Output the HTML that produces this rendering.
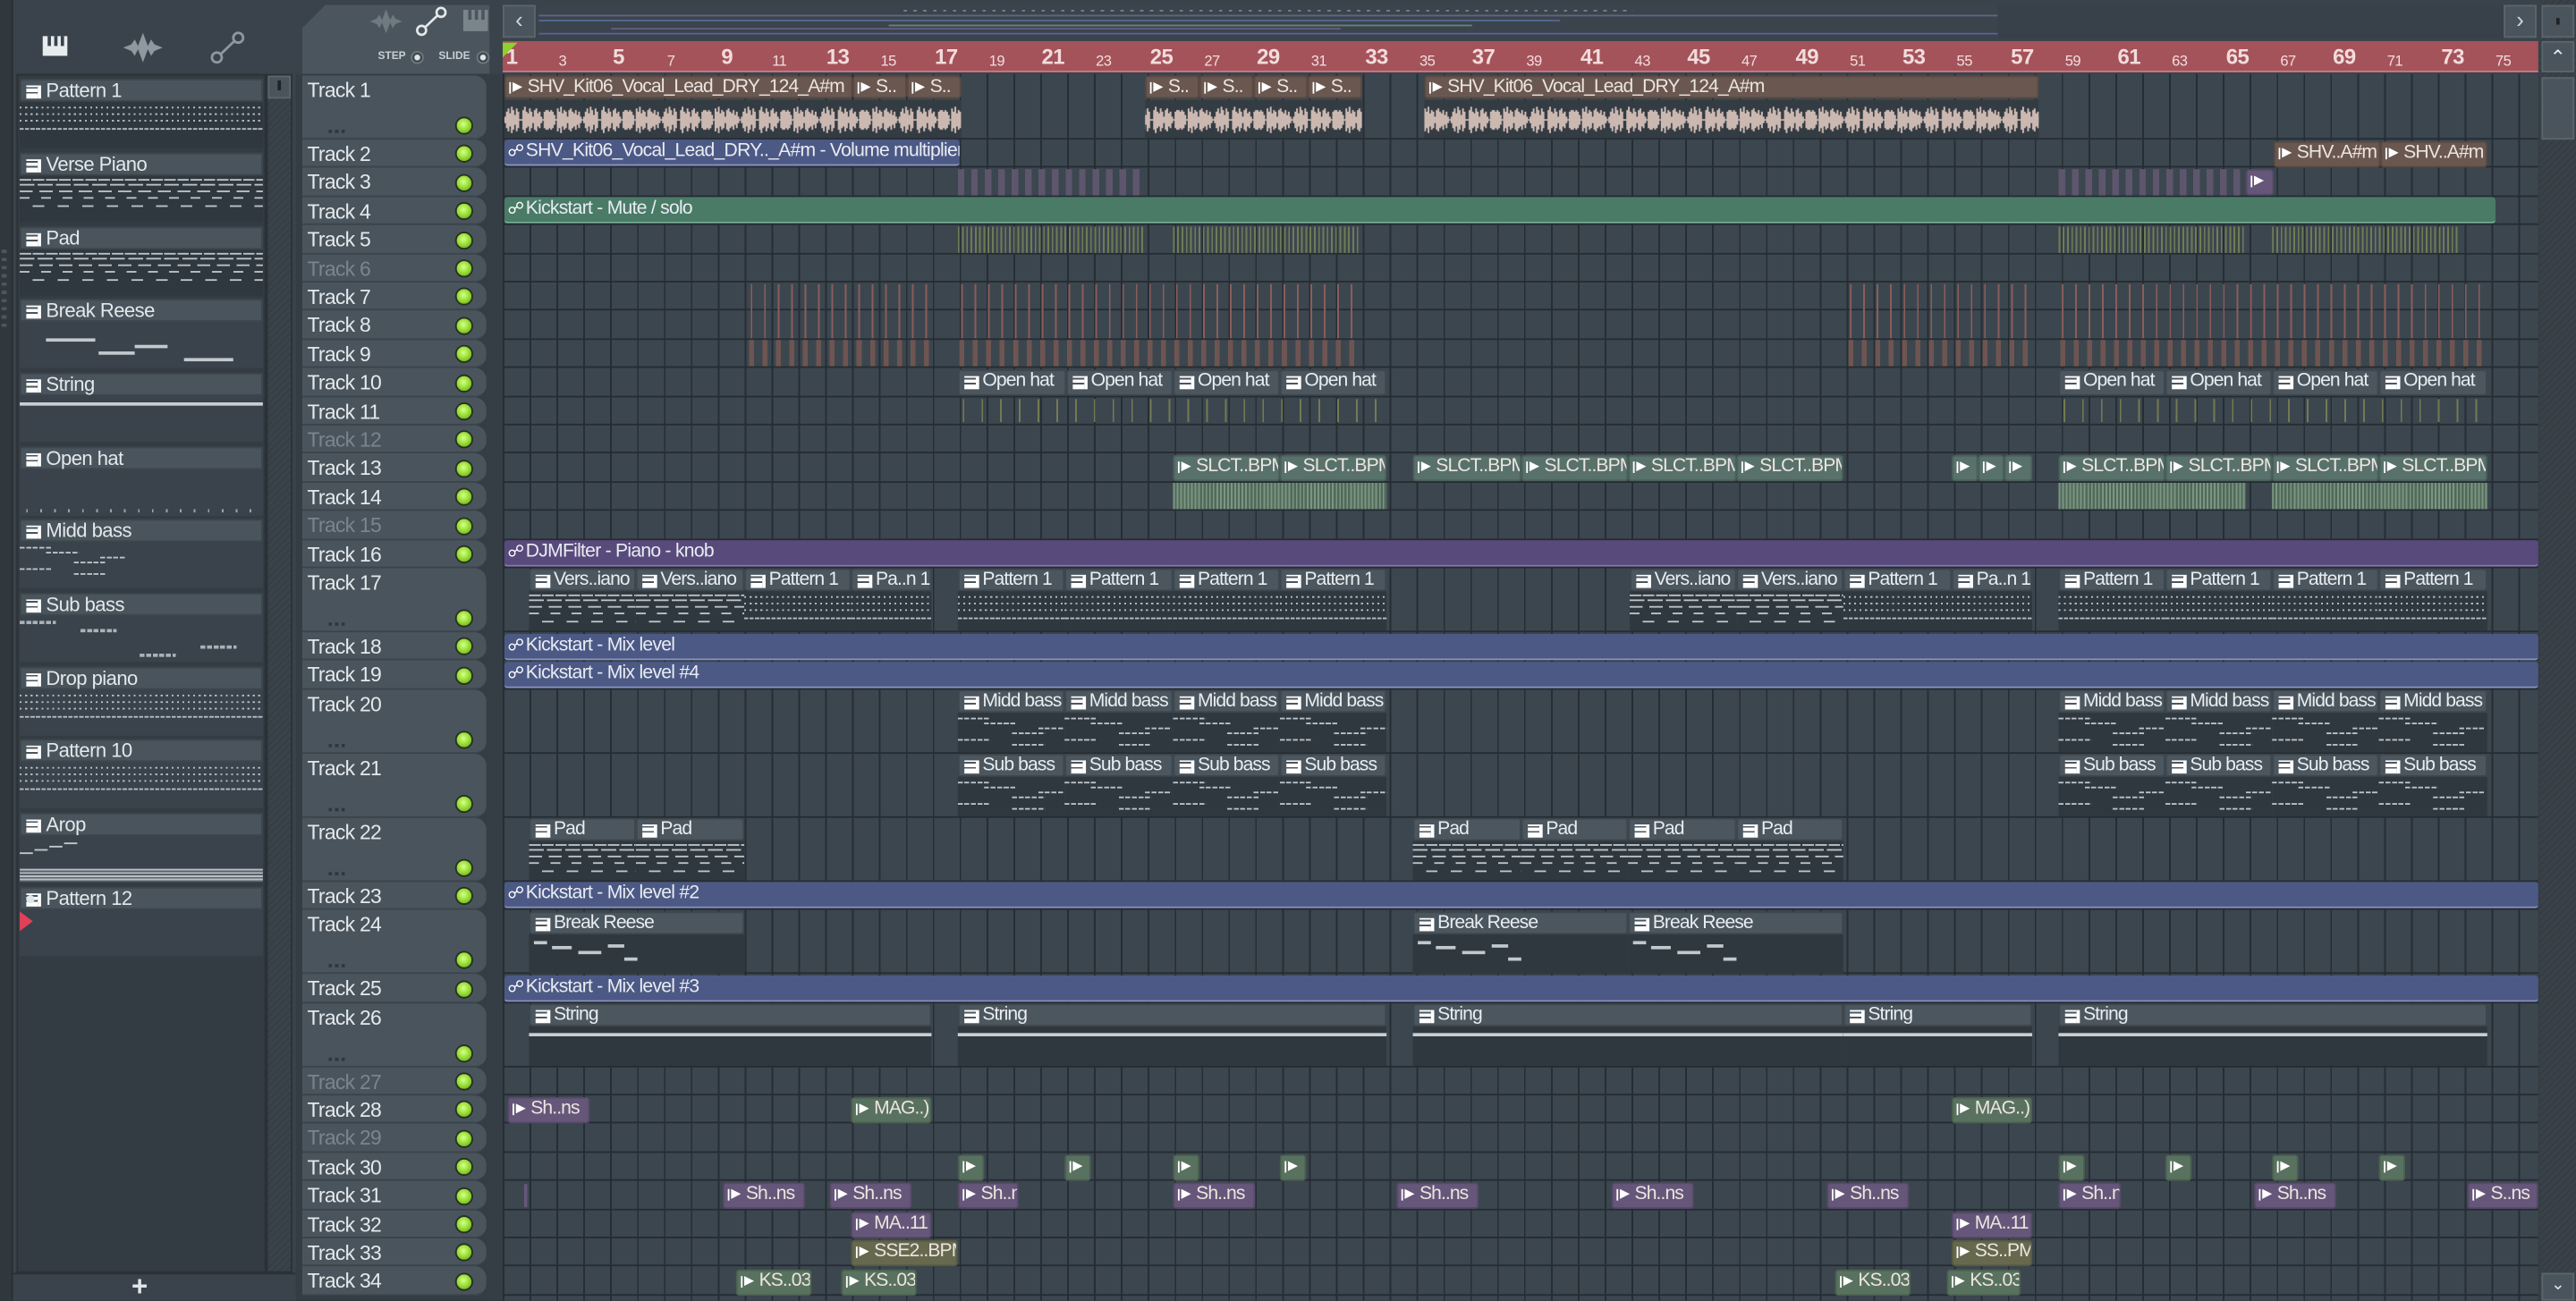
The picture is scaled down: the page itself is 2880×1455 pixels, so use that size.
<!DOCTYPE html>
<html><head><meta charset="utf-8">
<style>
*{box-sizing:border-box}
body{margin:0;width:2880px;height:1454px;overflow:hidden;background:#2f363c;font-family:"Liberation Sans Narrow","Liberation Sans",sans-serif}
.W{position:absolute;left:0;top:0;width:1568px;height:792px;transform:scale(1.836735);transform-origin:0 0;background:#353d44;overflow:hidden}
.a{position:absolute}
.lp{position:absolute;left:8px;top:0;width:172px;height:792px;background:#3a434b}
.list{position:absolute;left:10px;top:45px;width:152px;height:730px;background:#343c43;border:1px solid #2a3137}
.sb{position:absolute;left:162px;top:45px;width:16px;height:730px;background:repeating-linear-gradient(135deg,#363e45 0 1px,#3b434a 1px 3px);border:1px solid #2a3137}
.pi{position:absolute;left:12px;width:148px;height:14px;background:#4a545c;border:1px solid #3d464d;color:#e3e8eb;font-size:12px;line-height:13px;padding-left:15px;white-space:nowrap;letter-spacing:-0.3px}
.pi::before,.p::before{content:"";position:absolute;left:3px;top:3px;width:7px;height:8px;background:linear-gradient(#fff 0 1px,#4a545c 1px 2px,#fff 2px 4px,#4a545c 4px 5px,#fff 5px 8px);border-right:2px solid #fff}
.pv{position:absolute;left:12px;width:148px;height:28px;background:#3a434b}
.h{position:absolute;left:184px;width:112px;background:#4a545c;border-radius:0 7px 7px 0;border-bottom:1px solid #3c444b;color:#e4e9ec;font-size:12.5px;line-height:15px;padding-left:3px;padding-top:2px;white-space:nowrap;letter-spacing:-0.4px}
.h.d{color:#7b858c}
.h i{position:absolute;right:8px;bottom:2px;width:11px;height:11px;border-radius:50%;background:radial-gradient(circle at 45% 40%,#d8ff8a 0,#9be03a 45%,#5a9a16 100%);border:1px solid #27311f}
.h b{position:absolute;left:16px;bottom:3px;width:12px;height:2px;background:repeating-linear-gradient(90deg,#2f373d 0 2px,transparent 2px 4px)}
.gc{position:absolute;left:296px;top:45px;width:10px;height:747px;background:#353e45}
.grid{position:absolute;left:306px;top:45px;width:1239px;height:747px;background:repeating-linear-gradient(90deg,#262e35 0 1px,#3c464f 1px 16.36px)}
.r{position:absolute;left:306px;width:1239px;border-bottom:1px solid #252c33}
.p{position:absolute;height:14px;background:#4c565f;border:1px solid #3e474e;border-radius:2px;color:#e8edf0;font-size:11.5px;line-height:12px;padding-left:14px;white-space:nowrap;overflow:hidden;letter-spacing:-0.5px}
.p::before{background:linear-gradient(#fff 0 1px,#4c565f 1px 2px,#fff 2px 4px,#4c565f 4px 5px,#fff 5px 8px)}
.au{position:absolute;height:14px;background:#6a5850;border:1px solid #5a4a43;border-radius:2px;color:#ece4e0;font-size:11.5px;line-height:12px;padding-left:13px;white-space:nowrap;overflow:hidden;letter-spacing:-0.5px}
.au::before{content:"";position:absolute;left:4px;top:3px;border-left:6px solid #fff;border-top:3.5px solid transparent;border-bottom:3.5px solid transparent}
.au::after{content:"";position:absolute;left:2px;top:3px;width:1px;height:7px;background:#fff}
.pu{background:#66577a;border-color:#574a69}
.gr{background:#59725f;border-color:#4b6150}
.te{background:#58716b;border-color:#4a605b}
.ol{background:#66694e;border-color:#575a41}
.am{position:absolute;height:16px;border-radius:2px;color:#e8ecf2;font-size:11.5px;line-height:15px;padding-left:13px;white-space:nowrap;overflow:hidden;border-bottom:1px solid #8a94c0;letter-spacing:-0.4px}
.am::before{content:"\260D";position:absolute;left:2px;top:0;font-family:"DejaVu Sans",sans-serif;font-size:10px;color:#fff}
.bl{background:#4d5985}
.gn{background:#4a7b67;border-bottom-color:#7cb39a}
.pp{background:#594a7c;border-bottom-color:#8c7ab6}
.pb{position:absolute;background:#30383f}
.nd{background:repeating-linear-gradient(90deg,#b6bfc6 0 1.2px,transparent 1.2px 3.3px) 0 3px/100% 1px no-repeat,repeating-linear-gradient(90deg,#b6bfc6 0 1.2px,transparent 1.2px 3.3px) 0 7px/100% 1px no-repeat,repeating-linear-gradient(90deg,#b6bfc6 0 1.2px,transparent 1.2px 3.3px) 0 11px/100% 1px no-repeat,repeating-linear-gradient(90deg,#b6bfc6 0 2.5px,transparent 2.5px 3.3px) 0 16px/100% 1px no-repeat,#30383f}
.nl{background:repeating-linear-gradient(90deg,#bcc4ca 0 7px,transparent 7px 8px) 0 2px/100% 1px no-repeat,repeating-linear-gradient(90deg,#bcc4ca 0 9px,transparent 9px 11px) 0 5px/100% 1px no-repeat,repeating-linear-gradient(90deg,#bcc4ca 0 8px,transparent 8px 12px) 0 9px/100% 1px no-repeat,repeating-linear-gradient(90deg,#bcc4ca 0 6px,transparent 6px 13px) 0 13px/100% 1px no-repeat,repeating-linear-gradient(90deg,transparent 0 8px,#bcc4ca 8px 15px) 0 18px/100% 1px no-repeat,#30383f}
.nb{background:repeating-linear-gradient(90deg,#bcc4ca 0 3px,transparent 3px 4px) 0 3px/20px 1px no-repeat,repeating-linear-gradient(90deg,#bcc4ca 0 3px,transparent 3px 4px) 16px 6px/20px 1px no-repeat,repeating-linear-gradient(90deg,#bcc4ca 0 3px,transparent 3px 4px) 33px 12px/20px 1px no-repeat,repeating-linear-gradient(90deg,#bcc4ca 0 3px,transparent 3px 4px) 49px 9px/16px 1px no-repeat,repeating-linear-gradient(90deg,#bcc4ca 0 3px,transparent 3px 4px) 0 16px/20px 1px no-repeat,repeating-linear-gradient(90deg,#bcc4ca 0 3px,transparent 3px 4px) 33px 19px/20px 1px no-repeat,#30383f}
.nbr{background:linear-gradient(#c2c9ce,#c2c9ce) 3px 4px/8px 2px no-repeat,linear-gradient(#c2c9ce,#c2c9ce) 14px 7px/12px 2px no-repeat,linear-gradient(#c2c9ce,#c2c9ce) 30px 10px/14px 2px no-repeat,linear-gradient(#c2c9ce,#c2c9ce) 48px 6px/10px 2px no-repeat,linear-gradient(#c2c9ce,#c2c9ce) 58px 14px/8px 2px no-repeat,#30383f}
.ns{background:linear-gradient(#c8cfd4,#c8cfd4) 0 4px/100% 2px no-repeat,#30383f}
.rul{position:absolute;left:306px;top:25px;width:1239px;height:19px;background:#a4535b;border-bottom:1px solid #c77c83}
.rul span{position:absolute;color:#f2dcdc;font-size:9px;top:7px;letter-spacing:-0.3px}
.rul span.b{font-size:13px;top:2px;font-weight:bold}
.st{position:absolute;font-size:6.5px;color:#c8d0d5;font-weight:bold}
</style></head><body>
<div class="W">
<div class="a" style="left:0;top:0;width:1568px;height:45px;background:#3a434b"></div>
<div class="a" style="left:0;top:0;width:8px;height:792px;background:#30373d;border-right:1px solid #282e33"></div>
<div class="lp"></div>
<div class="a" style="left:26px;top:22px;width:15px;height:12px;background:#e8ecef"></div>
<div class="a" style="left:29px;top:22px;width:2px;height:6px;background:#3a434b"></div>
<div class="a" style="left:33px;top:22px;width:2px;height:6px;background:#3a434b"></div>
<div class="a" style="left:37px;top:22px;width:2px;height:6px;background:#3a434b"></div>
<svg class="a" style="left:74px;top:18px" width="26" height="22" viewBox="0 0 26 22"><path d="M1 11 L6 9 L8 6 L10 10 L13 2 L16 10 L18 6 L20 9 L25 11 L20 13 L18 16 L16 12 L13 20 L10 12 L8 16 L6 13 Z" fill="#8e989f"/></svg>
<svg class="a" style="left:128px;top:18px" width="22" height="22" viewBox="0 0 22 22"><circle cx="4" cy="17" r="3" fill="none" stroke="#8e989f" stroke-width="1.5"/><circle cx="17" cy="5" r="3" fill="none" stroke="#8e989f" stroke-width="1.5"/><path d="M6.3 15L14.7 7" stroke="#8e989f" stroke-width="1.5"/></svg>
<div class="a" style="left:184px;top:3px;width:114px;height:42px;background:#4b555e;clip-path:polygon(14px 0,100% 0,100% 100%,0 100%,0 14px)"></div>
<svg class="a" style="left:224px;top:4px" width="22" height="18" viewBox="0 0 26 22"><path d="M1 11 L6 9 L8 6 L10 10 L13 2 L16 10 L18 6 L20 9 L25 11 L20 13 L18 16 L16 12 L13 20 L10 12 L8 16 L6 13 Z" fill="#6f7980"/></svg>
<svg class="a" style="left:253px;top:3px" width="20" height="20" viewBox="0 0 22 22"><circle cx="4" cy="17" r="3" fill="none" stroke="#e4e9ec" stroke-width="1.6"/><circle cx="17" cy="5" r="3" fill="none" stroke="#e4e9ec" stroke-width="1.6"/><path d="M6.3 15L14.7 7" stroke="#e4e9ec" stroke-width="1.6"/></svg>
<div class="a" style="left:282px;top:6px;width:15px;height:13px;background:#7a848b"></div>
<div class="a" style="left:285px;top:6px;width:2px;height:6px;background:#4b555e"></div>
<div class="a" style="left:289px;top:6px;width:2px;height:6px;background:#4b555e"></div>
<div class="a" style="left:293px;top:6px;width:2px;height:6px;background:#4b555e"></div>
<div class="st" style="left:230px;top:31px">STEP</div>
<div class="a" style="left:250px;top:31px;width:8px;height:8px;border-radius:50%;border:1px solid #6d777e;background:radial-gradient(#dfe5e8 0 1.5px,#3e474e 2px)"></div>
<div class="st" style="left:267px;top:31px">SLIDE</div>
<div class="a" style="left:290px;top:31px;width:8px;height:8px;border-radius:50%;border:1px solid #6d777e;background:radial-gradient(#dfe5e8 0 1.5px,#3e474e 2px)"></div>
<div class="a" style="left:306px;top:3px;width:20px;height:20px;background:#4a545c;border:1px solid #5b656c;color:#cfd6da;font-size:14px;line-height:17px;text-align:center">&#8249;</div>
<div class="a" style="left:327px;top:3px;width:1197px;height:20px;background:#3b444d"></div>
<div class="a" style="left:328px;top:5px;width:888px;height:17px;background:linear-gradient(#6c6a8a,#6c6a8a) 0 4px/100% 1px no-repeat,linear-gradient(#5c6e9a,#5c6e9a) 0 7px/70% 1px no-repeat,linear-gradient(#6b8e78,#6b8e78) 40% 10px/40% 1px no-repeat,linear-gradient(#6b6488,#6b6488) 10% 12px/50% 1px no-repeat,linear-gradient(#5f6a98,#5f6a98) 0 15px/100% 1px no-repeat,repeating-linear-gradient(90deg,#7e8a90 0 2px,transparent 2px 6px) 50% 1px/50% 1px no-repeat;opacity:.85"></div>
<div class="a" style="left:1216px;top:3px;width:308px;height:20px;background:#384049"></div>
<div class="a" style="left:1524px;top:3px;width:20px;height:20px;background:#4a545c;border:1px solid #5b656c;color:#cfd6da;font-size:14px;line-height:17px;text-align:center">&#8250;</div>
<div class="a" style="left:1546px;top:0;width:22px;height:792px;background:repeating-linear-gradient(135deg,#353c43 0 1px,#3a4249 1px 3px)"></div>
<div class="a" style="left:1547px;top:3px;width:20px;height:20px;background:#4a545c;border:1px solid #5b656c"></div>
<div class="a" style="left:1556px;top:11px;width:2px;height:4px;background:#222"></div>
<div class="a" style="left:1547px;top:25px;width:20px;height:19px;background:#4a545c;border:1px solid #5b656c;color:#dfe5e8;font-size:12px;text-align:center;line-height:19px">&#8963;</div>
<div class="a" style="left:1547px;top:47px;width:20px;height:38px;background:#4a545c;border:1px solid #5b656c"></div>
<div class="a" style="left:1547px;top:775px;width:20px;height:17px;background:#4a545c;border:1px solid #5b656c;color:#dfe5e8;font-size:10px;text-align:center;line-height:14px">&#8964;</div>
<div class="rul">
<span class="b" style="left:2px">1</span><span style="left:34px">3</span><span class="b" style="left:67px">5</span><span style="left:100px">7</span><span class="b" style="left:133px">9</span><span style="left:164px">11</span><span class="b" style="left:197px">13</span><span style="left:230px">15</span><span class="b" style="left:263px">17</span><span style="left:296px">19</span><span class="b" style="left:328px">21</span><span style="left:361px">23</span><span class="b" style="left:394px">25</span><span style="left:427px">27</span><span class="b" style="left:459px">29</span><span style="left:492px">31</span><span class="b" style="left:525px">33</span><span style="left:558px">35</span><span class="b" style="left:590px">37</span><span style="left:623px">39</span><span class="b" style="left:656px">41</span><span style="left:689px">43</span><span class="b" style="left:721px">45</span><span style="left:754px">47</span><span class="b" style="left:787px">49</span><span style="left:820px">51</span><span class="b" style="left:852px">53</span><span style="left:885px">55</span><span class="b" style="left:918px">57</span><span style="left:951px">59</span><span class="b" style="left:983px">61</span><span style="left:1016px">63</span><span class="b" style="left:1049px">65</span><span style="left:1082px">67</span><span class="b" style="left:1114px">69</span><span style="left:1147px">71</span><span class="b" style="left:1180px">73</span><span style="left:1213px">75</span>
</div>
<div class="a" style="left:306px;top:26px;width:0;height:0;border-left:9px solid #8fd12f;border-bottom:9px solid transparent"></div>

<div class="list"></div>
<div class="sb"></div>
<div class="a" style="left:163px;top:46px;width:14px;height:14px;background:#4a545c;border:1px solid #5b656c"></div>
<div class="a" style="left:169px;top:49px;width:2px;height:6px;background:#1e2328"></div>
<div class="a" style="left:1px;top:152px;width:3px;height:50px;background:repeating-linear-gradient(#4e575e 0 2px,transparent 2px 5px)"></div>

<div class="pi" style="top:48px">Pattern 1</div><div class="pv nd" style="top:62px"></div>
<div class="pi" style="top:93px">Verse Piano</div><div class="pv nl" style="top:107px"></div>
<div class="pi" style="top:138px">Pad</div><div class="pv nl" style="top:152px"></div>
<div class="pi" style="top:182px">Break Reese</div><div class="pv" style="top:196px;background:linear-gradient(#c2c9ce,#c2c9ce) 16px 10px/30px 2px no-repeat,linear-gradient(#c2c9ce,#c2c9ce) 48px 18px/22px 2px no-repeat,linear-gradient(#c2c9ce,#c2c9ce) 70px 14px/20px 2px no-repeat,linear-gradient(#c2c9ce,#c2c9ce) 100px 22px/30px 2px no-repeat,#3a434b"></div>
<div class="pi" style="top:227px">String</div><div class="pv ns" style="top:241px;background-color:#3a434b"></div>
<div class="pi" style="top:272px">Open hat</div><div class="pv" style="top:286px;background:repeating-linear-gradient(90deg,#9aa3aa 0 1px,transparent 1px 8.5px) 4px 24px/100% 2px no-repeat,#3a434b"></div>
<div class="pi" style="top:316px">Midd bass</div><div class="pv nb" style="top:330px;background-color:#3a434b"></div>
<div class="pi" style="top:361px">Sub bass</div><div class="pv" style="top:375px;background:repeating-linear-gradient(90deg,#aab2b8 0 3px,transparent 3px 4px) 0 3px/22px 2px no-repeat,repeating-linear-gradient(90deg,#aab2b8 0 3px,transparent 3px 4px) 37px 8px/22px 2px no-repeat,repeating-linear-gradient(90deg,#aab2b8 0 3px,transparent 3px 4px) 73px 23px/22px 2px no-repeat,repeating-linear-gradient(90deg,#aab2b8 0 3px,transparent 3px 4px) 110px 18px/22px 2px no-repeat,#3a434b"></div>
<div class="pi" style="top:406px">Drop piano</div><div class="pv nd" style="top:420px;background-color:#3a434b"></div>
<div class="pi" style="top:450px">Pattern 10</div><div class="pv nd" style="top:464px;background-color:#3a434b"></div>
<div class="pi" style="top:495px">Arop</div><div class="pv" style="top:509px;background:linear-gradient(#c2c9ce,#c2c9ce) 0 10px/8px 1px no-repeat,linear-gradient(#c2c9ce,#c2c9ce) 9px 8px/8px 1px no-repeat,linear-gradient(#c2c9ce,#c2c9ce) 18px 6px/8px 1px no-repeat,linear-gradient(#c2c9ce,#c2c9ce) 27px 4px/8px 1px no-repeat,repeating-linear-gradient(#b8c0c6 0 1px,#5a636a 1px 2px) 0 20px/100% 8px no-repeat,#3a434b"></div>
<div class="pi" style="top:540px;padding-left:15px">Pattern 12</div>
<div class="a" style="left:16px;top:545px;width:5px;height:5px;border-radius:50%;background:#dfe5e8"></div>
<div class="a" style="left:12px;top:554px;width:148px;height:28px;background:#3a434b"></div>
<div class="a" style="left:12px;top:555px;width:0;height:0;border-left:8px solid #e0405a;border-top:6px solid transparent;border-bottom:6px solid transparent"></div>
<div class="a" style="left:8px;top:775px;width:172px;height:17px;background:#3a434b;border-top:1px solid #2a3137"></div>
<div class="a" style="left:80px;top:774px;color:#dfe5e8;font-size:17px;font-weight:bold">+</div>

<div class="gc"></div>
<div class="grid"></div>

<div class="h" style="top:46px;height:39px">Track 1<b></b><i></i></div>
<div class="h" style="top:85px;height:17.4px">Track 2<i></i></div>
<div class="h" style="top:102.4px;height:17.4px">Track 3<i></i></div>
<div class="h" style="top:119.8px;height:17.4px">Track 4<i></i></div>
<div class="h" style="top:137.2px;height:17.4px">Track 5<i></i></div>
<div class="h d" style="top:154.6px;height:17.4px">Track 6<i></i></div>
<div class="h" style="top:172px;height:17.4px">Track 7<i></i></div>
<div class="h" style="top:189.4px;height:17.4px">Track 8<i></i></div>
<div class="h" style="top:206.8px;height:17.4px">Track 9<i></i></div>
<div class="h" style="top:224.2px;height:17.4px">Track 10<i></i></div>
<div class="h" style="top:241.6px;height:17.4px">Track 11<i></i></div>
<div class="h d" style="top:259px;height:17.4px">Track 12<i></i></div>
<div class="h" style="top:276.4px;height:17.4px">Track 13<i></i></div>
<div class="h" style="top:293.8px;height:17.4px">Track 14<i></i></div>
<div class="h d" style="top:311.2px;height:17.4px">Track 15<i></i></div>
<div class="h" style="top:328.6px;height:17.4px">Track 16<i></i></div>
<div class="h" style="top:346px;height:39px">Track 17<b></b><i></i></div>
<div class="h" style="top:385px;height:17.4px">Track 18<i></i></div>
<div class="h" style="top:402.4px;height:17.4px">Track 19<i></i></div>
<div class="h" style="top:419.8px;height:39px">Track 20<b></b><i></i></div>
<div class="h" style="top:458.8px;height:39px">Track 21<b></b><i></i></div>
<div class="h" style="top:497.8px;height:39px">Track 22<b></b><i></i></div>
<div class="h" style="top:536.8px;height:17.4px">Track 23<i></i></div>
<div class="h" style="top:554.2px;height:39px">Track 24<b></b><i></i></div>
<div class="h" style="top:593.2px;height:17.4px">Track 25<i></i></div>
<div class="h" style="top:610.6px;height:39px">Track 26<b></b><i></i></div>
<div class="h d" style="top:649.6px;height:17.4px">Track 27<i></i></div>
<div class="h" style="top:667px;height:17.4px">Track 28<i></i></div>
<div class="h d" style="top:684.4px;height:17.4px">Track 29<i></i></div>
<div class="h" style="top:701.8px;height:17.4px">Track 30<i></i></div>
<div class="h" style="top:719.2px;height:17.4px">Track 31<i></i></div>
<div class="h" style="top:736.6px;height:17.4px">Track 32<i></i></div>
<div class="h" style="top:754px;height:17.4px">Track 33<i></i></div>
<div class="h" style="top:771.4px;height:17.4px">Track 34<i></i></div>

<div class="r" style="top:46px;height:39px"></div><div class="r" style="top:85px;height:17.4px"></div><div class="r" style="top:102.4px;height:17.4px"></div><div class="r" style="top:119.8px;height:17.4px"></div><div class="r" style="top:137.2px;height:17.4px"></div><div class="r" style="top:154.6px;height:17.4px"></div><div class="r" style="top:172px;height:17.4px"></div><div class="r" style="top:189.4px;height:17.4px"></div><div class="r" style="top:206.8px;height:17.4px"></div><div class="r" style="top:224.2px;height:17.4px"></div><div class="r" style="top:241.6px;height:17.4px"></div><div class="r" style="top:259px;height:17.4px"></div><div class="r" style="top:276.4px;height:17.4px"></div><div class="r" style="top:293.8px;height:17.4px"></div><div class="r" style="top:311.2px;height:17.4px"></div><div class="r" style="top:328.6px;height:17.4px"></div><div class="r" style="top:346px;height:39px"></div><div class="r" style="top:385px;height:17.4px"></div><div class="r" style="top:402.4px;height:17.4px"></div><div class="r" style="top:419.8px;height:39px"></div><div class="r" style="top:458.8px;height:39px"></div><div class="r" style="top:497.8px;height:39px"></div><div class="r" style="top:536.8px;height:17.4px"></div><div class="r" style="top:554.2px;height:39px"></div><div class="r" style="top:593.2px;height:17.4px"></div><div class="r" style="top:610.6px;height:39px"></div><div class="r" style="top:649.6px;height:17.4px"></div><div class="r" style="top:667px;height:17.4px"></div><div class="r" style="top:684.4px;height:17.4px"></div><div class="r" style="top:701.8px;height:17.4px"></div><div class="r" style="top:719.2px;height:17.4px"></div><div class="r" style="top:736.6px;height:17.4px"></div><div class="r" style="top:754px;height:17.4px"></div><div class="r" style="top:771.4px;height:17.4px"></div>

<div class="pb" style="left:307px;top:61px;width:278px;height:23px;background:#343c43"></div>
<div class="pb" style="left:697px;top:61px;width:132px;height:23px;background:#343c43"></div>
<div class="pb" style="left:867px;top:61px;width:374px;height:23px;background:#343c43"></div>
<svg class="a" style="left:0;top:0" width="1568" height="792">
<defs><pattern id="wf" width="48" height="22" patternUnits="userSpaceOnUse" x="307" y="62"><path d="M0.5 9v4M1.5 6v10M2.5 4v14M3.5 7v8M4.5 3v16M5.5 5v12M6.5 8v6M7.5 4v14M8.5 6v10M9.5 10.5v1M10.5 10.5v1M11.5 5v12M12.5 3v16M13.5 6v10M14.5 7v8M15.5 4v14M16.5 6v10M17.5 9v4M18.5 5v12M19.5 4v14M20.5 7v8M21.5 6v10M22.5 9v4M23.5 10.5v1M24.5 6v10M25.5 5v12M26.5 5v12M27.5 6v10M28.5 5v12M29.5 6v10M30.5 8v6M31.5 10.5v1M32.5 4v14M33.5 6v10M34.5 3v16M35.5 7v8M36.5 5v12M37.5 6v10M38.5 9v4M39.5 5v12M40.5 4v14M41.5 6v10M42.5 7v8M43.5 5v12M44.5 8v6M45.5 6v10M46.5 9v4M47.5 10.5v1" stroke="#cbb8b1" stroke-width="1.1"/></pattern></defs>
<rect x="307" y="62" width="278" height="22" fill="url(#wf)"/>
<rect x="697" y="62" width="132" height="22" fill="url(#wf)"/>
<rect x="867" y="62" width="374" height="22" fill="url(#wf)"/>
</svg>
<div class="au" style="left:307px;top:46px;width:212px">SHV_Kit06_Vocal_Lead_DRY_124_A#m</div>
<div class="au" style="left:519px;top:46px;width:33px">S..</div>
<div class="au" style="left:552px;top:46px;width:33px">S..</div>
<div class="au" style="left:697px;top:46px;width:33px">S..</div>
<div class="au" style="left:730px;top:46px;width:33px">S..</div>
<div class="au" style="left:763px;top:46px;width:33px">S..</div>
<div class="au" style="left:796px;top:46px;width:33px">S..</div>
<div class="au" style="left:867px;top:46px;width:374px">SHV_Kit06_Vocal_Lead_DRY_124_A#m</div>

<div class="am bl" style="left:307px;top:85px;width:277px">SHV_Kit06_Vocal_Lead_DRY.._A#m - Volume multiplier</div>
<div class="au" style="left:1384px;top:85.5px;width:65px;height:16px">SHV..A#m</div>
<div class="au" style="left:1449px;top:85.5px;width:65px;height:16px">SHV..A#m</div>
<div class="a" style="left:583px;top:103px;width:114px;height:16px;background:repeating-linear-gradient(90deg,#5d566d 0 4px,transparent 4px 8.2px)"></div>
<div class="a" style="left:1253px;top:103px;width:114px;height:16px;background:repeating-linear-gradient(90deg,#5d566d 0 4px,transparent 4px 8.2px)"></div>
<div class="au pu" style="left:1367px;top:103px;width:17px;height:16px"></div>
<div class="am gn" style="left:307px;top:120px;width:1212px">Kickstart - Mute / solo</div>
<div class="a" style="left:583px;top:138px;width:114px;height:16px;background:repeating-linear-gradient(90deg,#6f7c55 0 1px,transparent 1px 2.6px)"></div>
<div class="a" style="left:714px;top:138px;width:114px;height:16px;background:repeating-linear-gradient(90deg,#6f7c55 0 1px,transparent 1px 2.6px)"></div>
<div class="a" style="left:1253px;top:138px;width:114px;height:16px;background:repeating-linear-gradient(90deg,#6f7c55 0 1px,transparent 1px 2.6px)"></div>
<div class="a" style="left:1383px;top:138px;width:114px;height:16px;background:repeating-linear-gradient(90deg,#6f7c55 0 1px,transparent 1px 2.6px)"></div>
<div class="a" style="left:457px;top:173px;width:111px;height:33px;background:repeating-linear-gradient(90deg,#8a5d5a 0 1px,transparent 1px 8.18px)"></div>
<div class="a" style="left:585px;top:173px;width:244px;height:33px;background:repeating-linear-gradient(90deg,#8a5d5a 0 1px,transparent 1px 8.18px)"></div>
<div class="a" style="left:1126px;top:173px;width:111px;height:33px;background:repeating-linear-gradient(90deg,#8a5d5a 0 1px,transparent 1px 8.18px)"></div>
<div class="a" style="left:1255px;top:173px;width:260px;height:33px;background:repeating-linear-gradient(90deg,#8a5d5a 0 1px,transparent 1px 8.18px)"></div>
<div class="a" style="left:456px;top:207px;width:112px;height:16px;background:repeating-linear-gradient(90deg,#6e5551 0 3px,transparent 3px 8.18px)"></div>
<div class="a" style="left:584px;top:207px;width:245px;height:16px;background:repeating-linear-gradient(90deg,#6e5551 0 3px,transparent 3px 8.18px)"></div>
<div class="a" style="left:1125px;top:207px;width:112px;height:16px;background:repeating-linear-gradient(90deg,#6e5551 0 3px,transparent 3px 8.18px)"></div>
<div class="a" style="left:1254px;top:207px;width:261px;height:16px;background:repeating-linear-gradient(90deg,#6e5551 0 3px,transparent 3px 8.18px)"></div>
<div class="p" style="left:583px;top:224.5px;width:66px;height:16px">Open hat</div>
<div class="p" style="left:649px;top:224.5px;width:65px;height:16px">Open hat</div>
<div class="p" style="left:714px;top:224.5px;width:65px;height:16px">Open hat</div>
<div class="p" style="left:779px;top:224.5px;width:65px;height:16px">Open hat</div>
<div class="p" style="left:1253px;top:224.5px;width:65px;height:16px">Open hat</div>
<div class="p" style="left:1318px;top:224.5px;width:65px;height:16px">Open hat</div>
<div class="p" style="left:1383px;top:224.5px;width:65px;height:16px">Open hat</div>
<div class="p" style="left:1448px;top:224.5px;width:66px;height:16px">Open hat</div>
<div class="a" style="left:586px;top:243px;width:258px;height:14px;background:repeating-linear-gradient(90deg,#737a52 0 1px,transparent 1px 11.4px)"></div>
<div class="a" style="left:1256px;top:243px;width:258px;height:14px;background:repeating-linear-gradient(90deg,#737a52 0 1px,transparent 1px 11.4px)"></div>
<div class="au te" style="left:714px;top:277px;width:65px;height:16px">SLCT..BPM</div>
<div class="au te" style="left:779px;top:277px;width:65px;height:16px">SLCT..BPM</div>
<div class="au te" style="left:860px;top:277px;width:66px;height:16px">SLCT..BPM</div>
<div class="au te" style="left:926px;top:277px;width:65px;height:16px">SLCT..BPM</div>
<div class="au te" style="left:991px;top:277px;width:66px;height:16px">SLCT..BPM</div>
<div class="au te" style="left:1057px;top:277px;width:65px;height:16px">SLCT..BPM</div>
<div class="au te" style="left:1188px;top:277px;width:16px;height:16px"></div>
<div class="au te" style="left:1204px;top:277px;width:16px;height:16px"></div>
<div class="au te" style="left:1220px;top:277px;width:17px;height:16px"></div>
<div class="au te" style="left:1253px;top:277px;width:65px;height:16px">SLCT..BPM</div>
<div class="au te" style="left:1318px;top:277px;width:65px;height:16px">SLCT..BPM</div>
<div class="au te" style="left:1383px;top:277px;width:65px;height:16px">SLCT..BPM</div>
<div class="au te" style="left:1448px;top:277px;width:66px;height:16px">SLCT..BPM</div>
<div class="a" style="left:714px;top:294px;width:130px;height:16px;background:repeating-linear-gradient(90deg,#7c9583 0 1px,#4f6a5a 1px 2.2px)"></div>
<div class="a" style="left:1253px;top:294px;width:114px;height:16px;background:repeating-linear-gradient(90deg,#7c9583 0 1px,#4f6a5a 1px 2.2px)"></div>
<div class="a" style="left:1383px;top:294px;width:131px;height:16px;background:repeating-linear-gradient(90deg,#7c9583 0 1px,#4f6a5a 1px 2.2px)"></div>
<div class="am pp" style="left:307px;top:329px;width:1238px">DJMFilter - Piano - knob</div>
<div class="p" style="left:322px;top:346px;width:65px">Vers..iano</div><div class="pb nl" style="left:322px;top:360px;width:65px;height:24px"></div>
<div class="p" style="left:387px;top:346px;width:66px">Vers..iano</div><div class="pb nl" style="left:387px;top:360px;width:66px;height:24px"></div>
<div class="p" style="left:453px;top:346px;width:65px">Pattern 1</div><div class="pb nd" style="left:453px;top:360px;width:65px;height:24px"></div>
<div class="p" style="left:518px;top:346px;width:49px">Pa..n 1</div><div class="pb nd" style="left:518px;top:360px;width:49px;height:24px"></div>
<div class="p" style="left:583px;top:346px;width:65px">Pattern 1</div><div class="pb nd" style="left:583px;top:360px;width:65px;height:24px"></div>
<div class="p" style="left:648px;top:346px;width:66px">Pattern 1</div><div class="pb nd" style="left:648px;top:360px;width:66px;height:24px"></div>
<div class="p" style="left:714px;top:346px;width:65px">Pattern 1</div><div class="pb nd" style="left:714px;top:360px;width:65px;height:24px"></div>
<div class="p" style="left:779px;top:346px;width:65px">Pattern 1</div><div class="pb nd" style="left:779px;top:360px;width:65px;height:24px"></div>
<div class="p" style="left:992px;top:346px;width:65px">Vers..iano</div><div class="pb nl" style="left:992px;top:360px;width:65px;height:24px"></div>
<div class="p" style="left:1057px;top:346px;width:65px">Vers..iano</div><div class="pb nl" style="left:1057px;top:360px;width:65px;height:24px"></div>
<div class="p" style="left:1122px;top:346px;width:66px">Pattern 1</div><div class="pb nd" style="left:1122px;top:360px;width:66px;height:24px"></div>
<div class="p" style="left:1188px;top:346px;width:49px">Pa..n 1</div><div class="pb nd" style="left:1188px;top:360px;width:49px;height:24px"></div>
<div class="p" style="left:1253px;top:346px;width:65px">Pattern 1</div><div class="pb nd" style="left:1253px;top:360px;width:65px;height:24px"></div>
<div class="p" style="left:1318px;top:346px;width:65px">Pattern 1</div><div class="pb nd" style="left:1318px;top:360px;width:65px;height:24px"></div>
<div class="p" style="left:1383px;top:346px;width:65px">Pattern 1</div><div class="pb nd" style="left:1383px;top:360px;width:65px;height:24px"></div>
<div class="p" style="left:1448px;top:346px;width:66px">Pattern 1</div><div class="pb nd" style="left:1448px;top:360px;width:66px;height:24px"></div>
<div class="am bl" style="left:307px;top:385.5px;width:1238px">Kickstart - Mix level</div>
<div class="am bl" style="left:307px;top:403px;width:1238px">Kickstart - Mix level #4</div>
<div class="p" style="left:583px;top:420px;width:65px">Midd bass</div><div class="pb nb" style="left:583px;top:434px;width:65px;height:24px"></div>
<div class="p" style="left:648px;top:420px;width:66px">Midd bass</div><div class="pb nb" style="left:648px;top:434px;width:66px;height:24px"></div>
<div class="p" style="left:714px;top:420px;width:65px">Midd bass</div><div class="pb nb" style="left:714px;top:434px;width:65px;height:24px"></div>
<div class="p" style="left:779px;top:420px;width:65px">Midd bass</div><div class="pb nb" style="left:779px;top:434px;width:65px;height:24px"></div>
<div class="p" style="left:1253px;top:420px;width:65px">Midd bass</div><div class="pb nb" style="left:1253px;top:434px;width:65px;height:24px"></div>
<div class="p" style="left:1318px;top:420px;width:65px">Midd bass</div><div class="pb nb" style="left:1318px;top:434px;width:65px;height:24px"></div>
<div class="p" style="left:1383px;top:420px;width:65px">Midd bass</div><div class="pb nb" style="left:1383px;top:434px;width:65px;height:24px"></div>
<div class="p" style="left:1448px;top:420px;width:66px">Midd bass</div><div class="pb nb" style="left:1448px;top:434px;width:66px;height:24px"></div>
<div class="p" style="left:583px;top:459px;width:65px">Sub bass</div><div class="pb nb" style="left:583px;top:473px;width:65px;height:24px"></div>
<div class="p" style="left:648px;top:459px;width:66px">Sub bass</div><div class="pb nb" style="left:648px;top:473px;width:66px;height:24px"></div>
<div class="p" style="left:714px;top:459px;width:65px">Sub bass</div><div class="pb nb" style="left:714px;top:473px;width:65px;height:24px"></div>
<div class="p" style="left:779px;top:459px;width:65px">Sub bass</div><div class="pb nb" style="left:779px;top:473px;width:65px;height:24px"></div>
<div class="p" style="left:1253px;top:459px;width:65px">Sub bass</div><div class="pb nb" style="left:1253px;top:473px;width:65px;height:24px"></div>
<div class="p" style="left:1318px;top:459px;width:65px">Sub bass</div><div class="pb nb" style="left:1318px;top:473px;width:65px;height:24px"></div>
<div class="p" style="left:1383px;top:459px;width:65px">Sub bass</div><div class="pb nb" style="left:1383px;top:473px;width:65px;height:24px"></div>
<div class="p" style="left:1448px;top:459px;width:66px">Sub bass</div><div class="pb nb" style="left:1448px;top:473px;width:66px;height:24px"></div>
<div class="p" style="left:322px;top:498px;width:65px">Pad</div><div class="pb nl" style="left:322px;top:512px;width:65px;height:24px"></div>
<div class="p" style="left:387px;top:498px;width:66px">Pad</div><div class="pb nl" style="left:387px;top:512px;width:66px;height:24px"></div>
<div class="p" style="left:860px;top:498px;width:66px">Pad</div><div class="pb nl" style="left:860px;top:512px;width:66px;height:24px"></div>
<div class="p" style="left:926px;top:498px;width:65px">Pad</div><div class="pb nl" style="left:926px;top:512px;width:65px;height:24px"></div>
<div class="p" style="left:991px;top:498px;width:66px">Pad</div><div class="pb nl" style="left:991px;top:512px;width:66px;height:24px"></div>
<div class="p" style="left:1057px;top:498px;width:65px">Pad</div><div class="pb nl" style="left:1057px;top:512px;width:65px;height:24px"></div>
<div class="am bl" style="left:307px;top:537px;width:1238px">Kickstart - Mix level #2</div>
<div class="p" style="left:322px;top:555px;width:131px">Break Reese</div><div class="pb nbr" style="left:322px;top:569px;width:131px;height:24px"></div>
<div class="p" style="left:860px;top:555px;width:131px">Break Reese</div><div class="pb nbr" style="left:860px;top:569px;width:131px;height:24px"></div>
<div class="p" style="left:991px;top:555px;width:131px">Break Reese</div><div class="pb nbr" style="left:991px;top:569px;width:131px;height:24px"></div>
<div class="am bl" style="left:307px;top:593.5px;width:1238px">Kickstart - Mix level #3</div>
<div class="p" style="left:322px;top:611px;width:245px">String</div><div class="pb ns" style="left:322px;top:625px;width:245px;height:24px"></div>
<div class="p" style="left:583px;top:611px;width:261px">String</div><div class="pb ns" style="left:583px;top:625px;width:261px;height:24px"></div>
<div class="p" style="left:860px;top:611px;width:262px">String</div><div class="pb ns" style="left:860px;top:625px;width:262px;height:24px"></div>
<div class="p" style="left:1122px;top:611px;width:115px">String</div><div class="pb ns" style="left:1122px;top:625px;width:115px;height:24px"></div>
<div class="p" style="left:1253px;top:611px;width:261px">String</div><div class="pb ns" style="left:1253px;top:625px;width:261px;height:24px"></div>
<div class="au pu" style="left:309px;top:667.5px;width:50px;height:16px">Sh..ns</div>
<div class="au gr" style="left:518px;top:667.5px;width:49px;height:16px">MAG..)</div>
<div class="au gr" style="left:1188px;top:667.5px;width:49px;height:16px">MAG..)</div>
<div class="au gr" style="left:583px;top:702.5px;width:16px;height:16px"></div>
<div class="au gr" style="left:648px;top:702.5px;width:16px;height:16px"></div>
<div class="au gr" style="left:714px;top:702.5px;width:16px;height:16px"></div>
<div class="au gr" style="left:779px;top:702.5px;width:16px;height:16px"></div>
<div class="au gr" style="left:1253px;top:702.5px;width:16px;height:16px"></div>
<div class="au gr" style="left:1318px;top:702.5px;width:16px;height:16px"></div>
<div class="au gr" style="left:1383px;top:702.5px;width:16px;height:16px"></div>
<div class="au gr" style="left:1448px;top:702.5px;width:16px;height:16px"></div>
<div class="a" style="left:319px;top:721px;width:2px;height:14px;background:#66577a"></div>
<div class="au pu" style="left:440px;top:720px;width:50px;height:16px">Sh..ns</div>
<div class="au pu" style="left:505px;top:720px;width:50px;height:16px">Sh..ns</div>
<div class="au pu" style="left:583px;top:720px;width:37px;height:16px">Sh..ns</div>
<div class="au pu" style="left:714px;top:720px;width:50px;height:16px">Sh..ns</div>
<div class="au pu" style="left:850px;top:720px;width:50px;height:16px">Sh..ns</div>
<div class="au pu" style="left:981px;top:720px;width:50px;height:16px">Sh..ns</div>
<div class="au pu" style="left:1112px;top:720px;width:50px;height:16px">Sh..ns</div>
<div class="au pu" style="left:1253px;top:720px;width:38px;height:16px">Sh..ns</div>
<div class="au pu" style="left:1372px;top:720px;width:50px;height:16px">Sh..ns</div>
<div class="au pu" style="left:1502px;top:720px;width:43px;height:16px">S..ns</div>
<div class="au pu" style="left:518px;top:737.5px;width:49px;height:16px">MA..11</div>
<div class="au pu" style="left:1188px;top:737.5px;width:49px;height:16px">MA..11</div>
<div class="au ol" style="left:518px;top:755px;width:65px;height:16px">SSE2..BPM</div>
<div class="au ol" style="left:1188px;top:755px;width:49px;height:16px">SS..PM</div>
<div class="au gr" style="left:448px;top:772.5px;width:46px;height:16px">KS..03</div>
<div class="au gr" style="left:512px;top:772.5px;width:46px;height:16px">KS..03</div>
<div class="au gr" style="left:1117px;top:772.5px;width:46px;height:16px">KS..03</div>
<div class="au gr" style="left:1185px;top:772.5px;width:45px;height:16px">KS..03</div>
</div>
</body></html>
